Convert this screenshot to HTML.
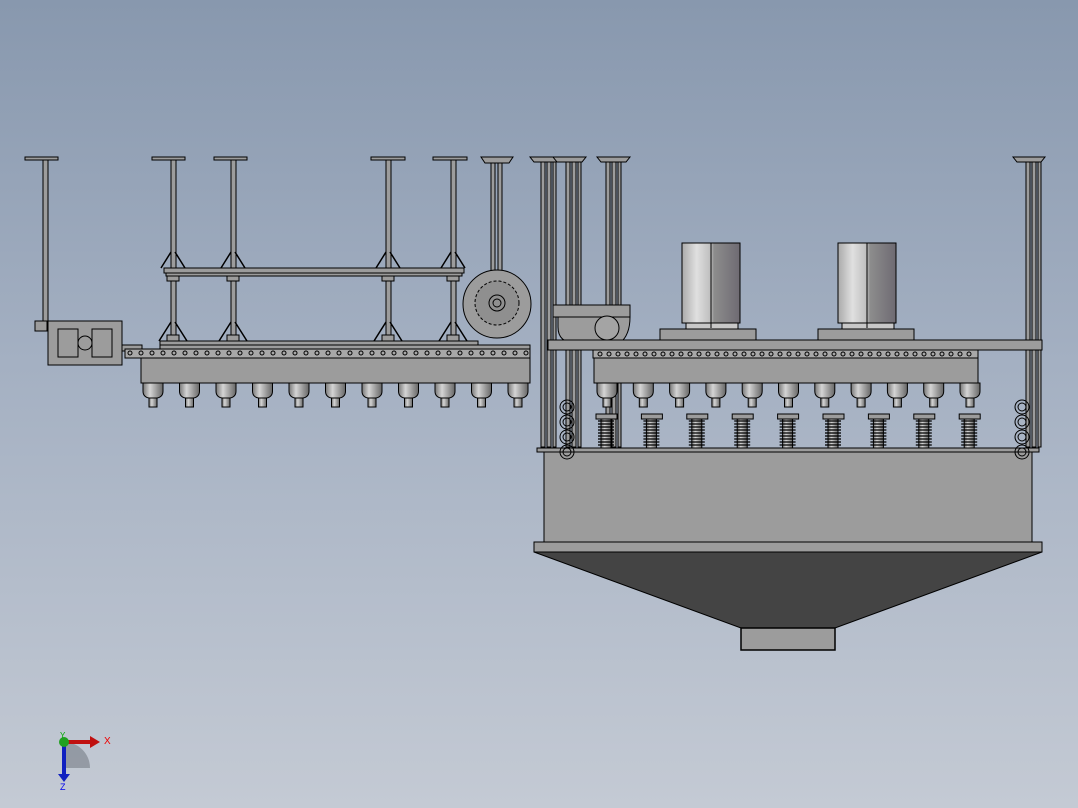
<!DOCTYPE html>
<html><head><meta charset="utf-8"><style>
html,body{margin:0;padding:0;width:1078px;height:808px;overflow:hidden}
body{background:linear-gradient(#8898ae 0%,#a4b0c2 45%,#c4cad4 100%)}
svg{position:absolute;left:0;top:0}
</style></head><body>
<svg id="s" width="1078" height="808" viewBox="0 0 1078 808" xmlns="http://www.w3.org/2000/svg" stroke="#000" stroke-width="1" fill="#9c9c9c">
<defs>
<linearGradient id="cyl" x1="0" x2="1"><stop offset="0" stop-color="#aaa"/><stop offset=".25" stop-color="#e0e0e0"/><stop offset=".5" stop-color="#bdbdbd"/><stop offset=".55" stop-color="#8d8d8d"/><stop offset="1" stop-color="#6e6a72"/></linearGradient>
<linearGradient id="noz" x1="0" x2="1"><stop offset="0" stop-color="#777"/><stop offset=".35" stop-color="#d4d4d4"/><stop offset="1" stop-color="#666"/></linearGradient>
</defs>
<rect x="537" y="448" width="502" height="4" fill="#9c9c9c"/>
<rect x="544" y="452" width="488" height="90" fill="#9c9c9c"/>
<rect x="534" y="542" width="508" height="10" fill="#9c9c9c"/>
<polygon points="534,552 1042,552 835,628 741,628" fill="#444"/>
<rect x="741" y="628" width="94" height="22" fill="#9c9c9c" stroke-width="1.5"/>
<g id="g"></g>
<g stroke="none">
<path d="M64 742 A26 26 0 0 1 90 768 L64 768Z" fill="#808890" opacity=".7"/>
<rect x="62" y="742" width="4" height="34" fill="#1020c0"/>
<polygon points="58,774 70,774 64,782" fill="#1020c0"/>
<rect x="64" y="740" width="28" height="4" fill="#c01010"/>
<polygon points="90,736 100,742 90,748" fill="#c01010"/>
<circle cx="64" cy="742" r="5" fill="#20a020"/>
<text x="104" y="744" font-family="Liberation Sans,sans-serif" font-size="10" fill="#e00">X</text>
<text x="60" y="790" font-family="Liberation Sans,sans-serif" font-size="9" fill="#00e">Z</text>
<text x="60" y="738" font-family="Liberation Sans,sans-serif" font-size="8" fill="#0a0">Y</text>
</g>
</svg>
<script>
const g=document.getElementById('g');let h='';
const R=(x,y,w,hh,f='#9c9c9c')=>{h+=`<rect x="${x}" y="${y}" width="${w}" height="${hh}" fill="${f}"/>`};
[[25,58,45],[152,185,173],[214,247,233],[371,405,388],[433,467,453]].forEach(([a,b,c])=>{R(a,157,b-a,3);R(c-2,160,5,c==45?165:182);});
[173,233,388,453].forEach(c=>{h+=`<path d="M${c-12} 268 L${c-2} 252 M${c+2} 252 L${c+12} 268 M${c-14} 341 L${c-2} 322 M${c+2} 322 L${c+14} 341" fill="none" stroke-width="1.5"/>`;R(c-6,275,12,6);R(c-6,335,12,6);});
R(164,268,300,5);R(166,273,296,3);R(160,341,318,4);
R(35,321,12,10);R(48,321,74,44);R(58,329,20,28);R(92,329,20,28);h+=`<circle cx="85" cy="343" r="7" fill="none"/>`;
R(122,345,20,6);R(160,345,370,4);R(125,349,405,9,'#a8a8a8');
for(let x=130;x<528;x+=11)h+=`<circle cx="${x}" cy="353" r="2" fill="none"/>`;
R(141,358,389,25);
for(let i=0;i<11;i++){let x=153+i*36.5;h+=`<path d="M${x-10} 383 h20 v8 q0 6 -6 7 h-8 q-6 -1 -6 -7z" fill="url(#noz)"/>`;R(x-4,398,8,9,'url(#noz)');}
h+=`<rect x="491" y="157" width="4" height="150"/><rect x="498" y="157" width="4" height="150"/><path d="M481 157 h32 l-4 6 h-24z"/><circle cx="497" cy="304" r="34"/><circle cx="497" cy="303" r="22" fill="#8f8f8f" stroke-dasharray="3 2"/><circle cx="497" cy="303" r="8" fill="none"/><circle cx="497" cy="303" r="4" fill="none"/>`;
[[530,560,541],[553,586,566],[597,630,606],[1013,1045,1026]].forEach(([a,b,c])=>{h+=`<path d="M${a} 157 h${b-a} l-4 5 h-${b-a-8}z"/>`;R(c,162,4,285);R(c+6,162,4,285);R(c+12,162,3,285);});
R(553,305,77,12);h+=`<path d="M558 317 v10 q0 16 18 16 h44 q10 -8 10 -26z" fill="#9c9c9c"/><circle cx="607" cy="328" r="12" fill="#a4a4a4"/>`;
R(548,340,494,10);
[[660,682],[818,838]].forEach(([bx,mx])=>{R(bx,329,96,11);R(mx+4,322,52,7,'#c8c8c8');R(mx,243,58,80,'url(#cyl)');h+=`<line x1="${mx+29}" y1="243" x2="${mx+29}" y2="328"/>`;});
R(593,350,385,8,'#a8a8a8');for(let x=600;x<978;x+=9)h+=`<circle cx="${x}" cy="354" r="2" fill="none"/>`;
R(594,358,384,25);
for(let i=0;i<11;i++){let x=607+i*36.3;h+=`<path d="M${x-10} 383 h20 v8 q0 6 -6 7 h-8 q-6 -1 -6 -7z" fill="url(#noz)"/>`;R(x-4,398,8,9,'url(#noz)');}
for(let i=0;i<9;i++){let x=606+i*45.4;R(x-10,414,21,5);R(x-5,419,10,29,'url(#noz)');for(let y=421;y<446;y+=3)h+=`<line x1="${x-8}" y1="${y}" x2="${x+8}" y2="${y}" stroke-width="1.3"/>`;}
[561,1016].forEach(x=>{for(let y=400;y<446;y+=15)h+=`<circle cx="${x+6}" cy="${y+7}" r="7" fill="none"/><circle cx="${x+6}" cy="${y+7}" r="4" fill="none"/>`;});
g.innerHTML=h;
</script>
</body></html>
